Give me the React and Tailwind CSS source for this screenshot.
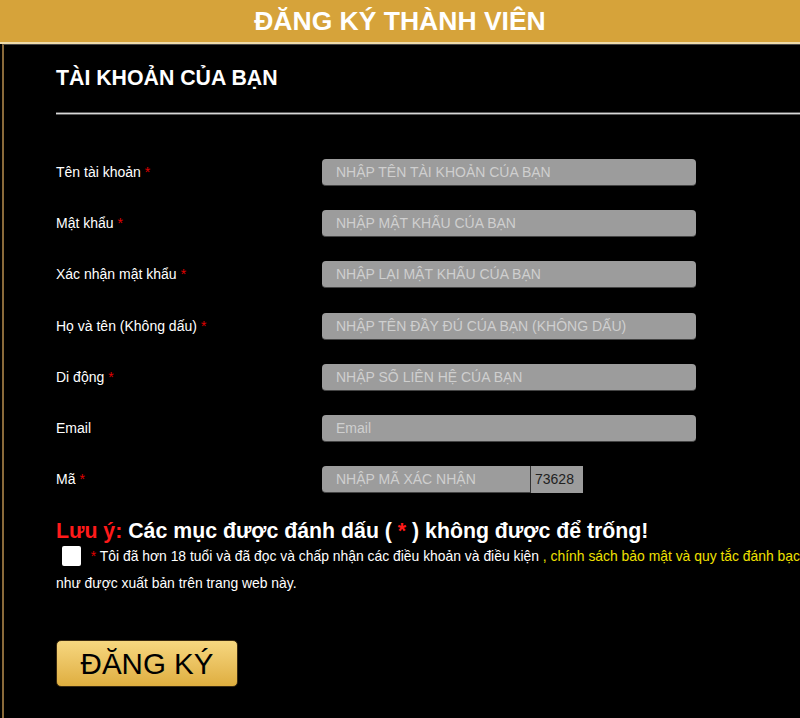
import React from 'react';

const fields = [
  { label: 'Tên tài khoản', required: true, placeholder: 'NHẬP TÊN TÀI KHOẢN CỦA BẠN' },
  { label: 'Mật khẩu', required: true, placeholder: 'NHẬP MẬT KHẨU CỦA BẠN' },
  { label: 'Xác nhận mật khẩu', required: true, placeholder: 'NHẬP LẠI MẬT KHẨU CỦA BẠN' },
  { label: 'Họ và tên (Không dấu)', required: true, placeholder: 'NHẬP TÊN ĐẦY ĐỦ CỦA BẠN (KHÔNG DẤU)' },
  { label: 'Di động', required: true, placeholder: 'NHẬP SỐ LIÊN HỆ CỦA BẠN' },
  { label: 'Email', required: false, placeholder: 'Email' },
];

const Label = ({ text, required }) => (
  <label className="w-[266px] text-[14px] text-white">
    {text}
    {required && <span className="text-[#e00000] ml-1">*</span>}
  </label>
);

export default function App() {
  return (
    <div className="w-[800px] h-[718px] overflow-hidden bg-black" style={{ fontFamily: '"Liberation Sans", Arial, sans-serif' }}>
      {/* HEADER */}
      <div className="h-[44px] bg-[#d6a33a] border-b-2 border-[#eedcab] flex items-center justify-center">
        <h1 className="text-[26.5px] font-bold text-white leading-none">ĐĂNG KÝ THÀNH VIÊN</h1>
      </div>

      <div className="ml-[2px] h-full border-l-2 border-t border-l-[#8a6a3a] border-t-[#4a4a4a] pl-[52px]">
        <h2 className="pt-[21px] text-[21.3px] font-bold text-white leading-6">TÀI KHOẢN CỦA BẠN</h2>
        <div className="mt-[22px] h-[3px] w-[800px] border-t border-b border-[#5a5a5a] bg-[#d8d8d8]"></div>

        {/* FORM */}
        <div className="mt-[44px] space-y-[24.2px]">
          {fields.map((f) => (
            <div key={f.label} className="flex items-center h-[27px]">
              <Label text={f.label} required={f.required} />
              <input
                type="text"
                placeholder={f.placeholder}
                className="w-[374px] h-[27px] rounded-[4px] bg-[#9c9c9c] border-b border-[#444] px-[14px] text-[14px] text-white placeholder:text-[#cfcfcf] outline-none"
              />
            </div>
          ))}
          <div className="flex items-center h-[27px]">
            <Label text="Mã" required />
            <input
              type="text"
              placeholder="NHẬP MÃ XÁC NHẬN"
              className="w-[208px] h-[27px] rounded-l-[4px] bg-[#9c9c9c] border-b border-[#444] px-[14px] text-[14px] text-white placeholder:text-[#cfcfcf] outline-none"
            />
            <div className="w-[53px] h-[27px] bg-[#9c9c9c] border-l border-[#333] flex items-center pl-[4px] text-[14px] text-[#222]">73628</div>
          </div>
        </div>

        <p className="mt-[26px] text-[21.3px] font-bold text-white leading-6">
          <span className="text-[#ff1a1a]">Lưu ý:</span> Các mục được đánh dấu ( <span className="text-[#ff1a1a]">*</span> ) không được để trống!
        </p>

        <div className="mt-[1px] flex items-center h-[24px] whitespace-nowrap">
          <input type="checkbox" className="ml-[6px] mr-[10px] w-[20px] h-[20px] appearance-none bg-white rounded-[2px]" />
          <span className="text-[13.9px] text-white">
            <span className="text-[#e00000]">*</span> Tôi đã hơn 18 tuổi và đã đọc và chấp nhận các điều khoản và điều kiện <span className="text-[#f0e000]">, chính sách bảo mật và quy tắc đánh bạc</span>
          </span>
        </div>
        <p className="mt-[5px] text-[13.9px] text-white leading-5">như được xuất bản trên trang web này.</p>

        <button className="mt-[47px] w-[182px] h-[47px] rounded-[5px] border border-[#3a2a10] bg-gradient-to-b from-[#f6d77f] to-[#dfae3e] text-[29.5px] text-black leading-none">
          ĐĂNG KÝ
        </button>
      </div>
    </div>
  );
}
